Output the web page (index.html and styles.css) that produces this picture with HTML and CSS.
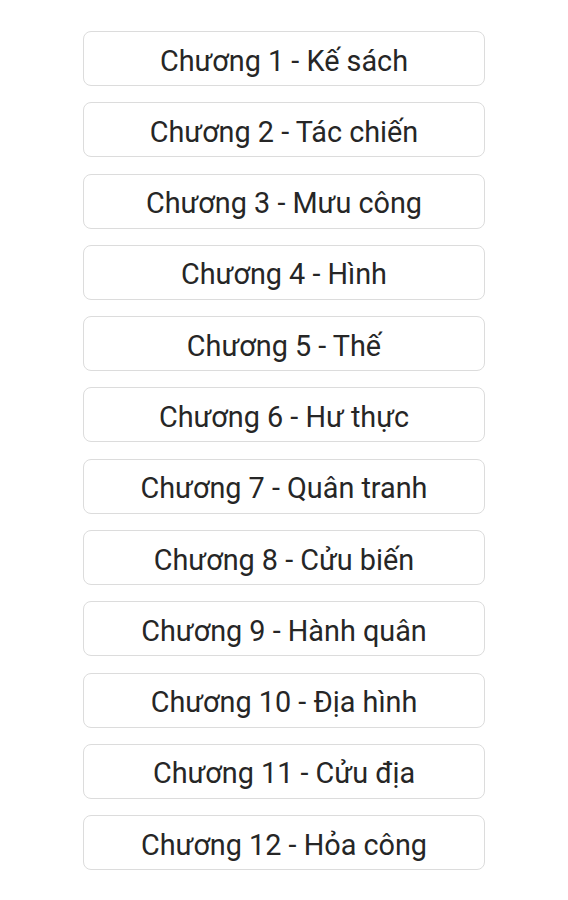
FILE: index.html
```html
<!DOCTYPE html>
<html lang="vi">
<head>
<meta charset="utf-8">
<link rel="stylesheet" href="styles.css">
</head>
<body>
<div class="list">
  <div class="btn">Chương 1 - Kế sách</div>
  <div class="btn">Chương 2 - Tác chiến</div>
  <div class="btn">Chương 3 - Mưu công</div>
  <div class="btn">Chương 4 - Hình</div>
  <div class="btn">Chương 5 - Thế</div>
  <div class="btn">Chương 6 - Hư thực</div>
  <div class="btn">Chương 7 - Quân tranh</div>
  <div class="btn">Chương 8 - Cửu biến</div>
  <div class="btn">Chương 9 - Hành quân</div>
  <div class="btn">Chương 10 - Địa hình</div>
  <div class="btn">Chương 11 - Cửu địa</div>
  <div class="btn">Chương 12 - Hỏa công</div>
</div>
</body>
</html>
```
FILE: styles.css
```css
html, body {
  margin: 0;
  padding: 0;
  background: #ffffff;
}
body {
  font-family: Roboto, "Noto Sans", sans-serif;
}
.list {
  display: flex;
  flex-direction: column;
  gap: 16.3px;
  padding: 31px 0 0 83px;
  width: 402px;
}
.btn {
  box-sizing: border-box;
  height: 55px;
  padding-top: 4px;
  border: 1.5px solid #dcdcdc;
  border-radius: 8px;
  display: flex;
  align-items: center;
  justify-content: center;
  font-size: 28.8px;
  color: #262626;
  background: #ffffff;
}
```
